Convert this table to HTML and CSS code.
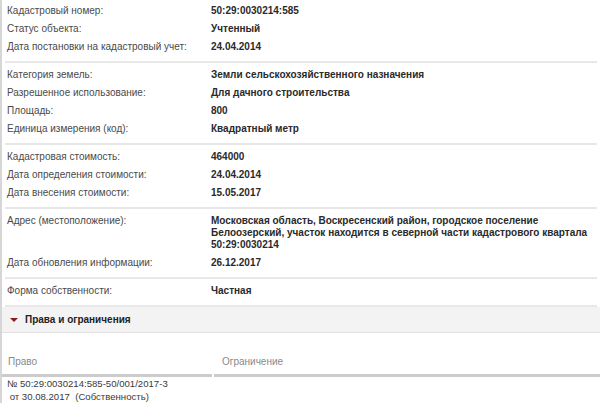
FILE: index.html
```html
<!DOCTYPE html>
<html lang="ru">
<head>
<meta charset="utf-8">
<link rel="stylesheet" href="styles.css">
</head>
<body>
<div class="page">
  <div class="info">
    <div class="group first">
      <div class="row"><div class="lbl">Кадастровый номер:</div><div class="val">50:29:0030214:585</div></div>
      <div class="row"><div class="lbl">Статус объекта:</div><div class="val">Учтенный</div></div>
      <div class="row"><div class="lbl">Дата постановки на кадастровый учет:</div><div class="val">24.04.2014</div></div>
    </div>
    <div class="group">
      <div class="row"><div class="lbl">Категория земель:</div><div class="val">Земли сельскохозяйственного назначения</div></div>
      <div class="row"><div class="lbl">Разрешенное использование:</div><div class="val">Для дачного строительства</div></div>
      <div class="row"><div class="lbl">Площадь:</div><div class="val">800</div></div>
      <div class="row"><div class="lbl">Единица измерения (код):</div><div class="val">Квадратный метр</div></div>
    </div>
    <div class="group">
      <div class="row"><div class="lbl">Кадастровая стоимость:</div><div class="val">464000</div></div>
      <div class="row"><div class="lbl">Дата определения стоимости:</div><div class="val">24.04.2014</div></div>
      <div class="row"><div class="lbl">Дата внесения стоимости:</div><div class="val">15.05.2017</div></div>
    </div>
    <div class="group">
      <div class="row"><div class="lbl">Адрес (местоположение):</div><div class="val addr">Московская область, Воскресенский район, городское поселение Белоозерский, участок находится в северной части кадастрового квартала 50:29:0030214</div></div>
      <div class="row"><div class="lbl">Дата обновления информации:</div><div class="val">26.12.2017</div></div>
    </div>
    <div class="group">
      <div class="row"><div class="lbl">Форма собственности:</div><div class="val">Частная</div></div>
    </div>
  </div>
  <div class="section-head"><span class="caret"></span><span class="section-title">Права и ограничения</span></div>
  <div class="rights">
    <div class="rights-head">
      <div class="th th-right">Право</div>
      <div class="th th-limit">Ограничение</div>
    </div>
    <div class="rights-row">
      <div class="td">№ 50:29:0030214:585-50/001/2017-3<br>&nbsp;от 30.08.2017&nbsp; (Собственность)</div>
      <div class="td"></div>
    </div>
  </div>
</div>
</body>
</html>
```

FILE: styles.css
```css
html, body {
  margin: 0;
  padding: 0;
  background: #ffffff;
}
body {
  font-family: "Liberation Sans", Arial, sans-serif;
  font-size: 10px;
  color: #333333;
  width: 600px;
  height: 403px;
  overflow: hidden;
}
.page {
  border-left: 2px solid #d6d6d6;
  min-height: 403px;
  box-sizing: border-box;
}
.info {
  padding: 0 3px 0 3px;
}
.group {
  padding: 3px 0 5px 0;
  border-bottom: 2px solid #e8e8e8;
}
.group.first {
  padding-top: 2px;
}
.row {
  display: grid;
  grid-template-columns: 206px 1fr;
  padding: 3px 0;
  line-height: 12px;
}
.lbl {
  padding-left: 2px;
  color: #4a4a4a;
}
.val {
  font-weight: bold;
  color: #2a2a2a;
}
.val.addr {
  max-width: 384px;
}
.section-head {
  display: flex;
  align-items: center;
  height: 25px;
  background: #f3f3f3;
  border-bottom: 1px solid #e2e2e2;
  padding-left: 8px;
}
.caret {
  width: 0;
  height: 0;
  border-left: 4px solid transparent;
  border-right: 4px solid transparent;
  border-top: 4px solid #8b1a1a;
  margin-right: 7px;
}
.section-title {
  font-weight: bold;
  font-size: 10px;
  color: #222222;
}
.rights {
  padding-top: 22px;
}
.rights-head {
  display: grid;
  grid-template-columns: 210px 1fr;
  column-gap: 2px;
}
.th {
  color: #8a8a8a;
  font-size: 10px;
  line-height: 14px;
  padding: 0 0 5px 0;
  border-bottom: 3px solid #cccccc;
}
.th-right {
  padding-left: 6px;
}
.th-limit {
  padding-left: 8px;
}
.rights-row {
  display: grid;
  grid-template-columns: 212px 1fr;
  border-bottom: 1px solid #e4e4e4;
  padding: 0;
}
.td {
  padding-left: 5px;
  font-size: 9.6px;
  line-height: 13px;
  color: #3a3a3a;
}
```
